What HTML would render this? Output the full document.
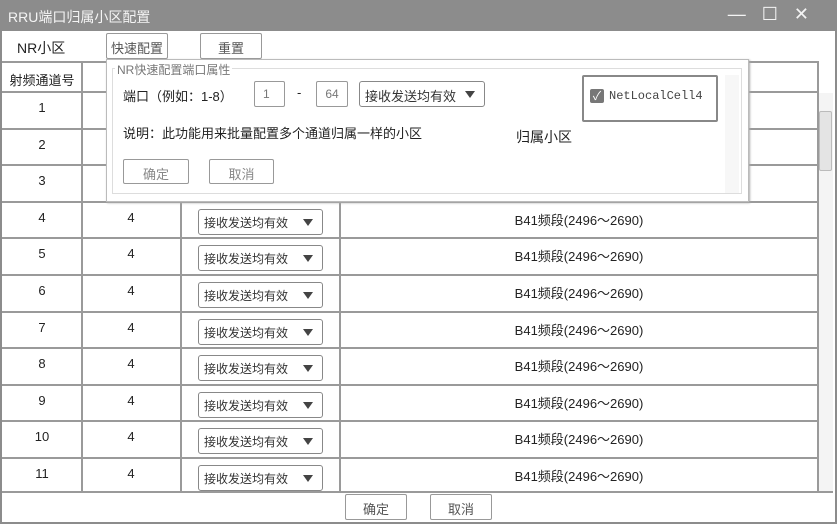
<!DOCTYPE html>
<html><head><meta charset="utf-8"><style>
*{box-sizing:border-box;margin:0;padding:0}
body{width:837px;height:524px;overflow:hidden;background:#fff;font-family:"Liberation Sans","Noto Sans CJK SC",sans-serif;font-size:13px;color:#222;position:relative}
.abs{position:absolute}
.title{left:0;top:0;width:837px;height:31px;background:#8c8c8c;color:#f4f4f4;font-size:14px;padding:7px 0 0 8px}
.frame{left:0;top:31px;width:837px;height:493px;border:2px solid #8c8c8c;border-top:none}
.btn{border:1px solid #999;border-radius:2px;background:#fff;color:#555;text-align:center;font-size:13px}
.hl{height:2px;background:#9a9a9a;left:2px;width:816px}
.vl{width:2px;background:#9a9a9a}
.cell{text-align:center;font-size:13px}
.sel{border:1px solid #888;border-radius:3px;background:#fff;font-size:12px;color:#333;padding:4px 0 0 5px}
.sel::after{content:"";position:absolute;right:9px;top:9px;border-left:5px solid transparent;border-right:5px solid transparent;border-top:7px solid #444}
</style></head><body>
<div class="abs title">RRU端口归属小区配置</div>
<div class="abs" style="right:12px;top:4px;color:#f4f4f4;font-size:18px;letter-spacing:16px">—☐✕</div>
<div class="abs frame"></div>
<div class="abs" style="left:17px;top:38px;font-size:14px">NR小区</div>
<div class="abs btn" style="left:106px;top:33px;width:62px;height:26px;padding-top:4px">快速配置</div>
<div class="abs btn" style="left:200px;top:33px;width:62px;height:26px;padding-top:4px">重置</div>
<div class="abs hl" style="top:61px"></div>
<div class="abs cell" style="left:2px;top:70px;width:80px">射频通道号</div>
<div class="abs vl" style="left:81px;top:61px;height:430px"></div>
<div class="abs vl" style="left:180px;top:201px;height:290px"></div>
<div class="abs vl" style="left:339px;top:201px;height:290px"></div>
<div class="abs vl" style="left:817px;top:61px;height:430px"></div>
<div class="abs" style="left:819px;top:93px;width:14px;height:398px;background:#f4f4f4"></div>
<div class="abs" style="left:819px;top:111px;width:13px;height:60px;background:#e4e4e4;border:1px solid #bbb;border-radius:2px"></div>
<div id="rows"></div>
<script>
var h='';for(var i=1;i<=11;i++){var t=Math.round(92+(i-1)*36.6);
h+='<div class="abs hl" style="top:'+(t-1)+'px"></div>';
h+='<div class="abs cell" style="left:2px;top:'+(t+8)+'px;width:80px">'+i+'</div>';
if(i>=4){h+='<div class="abs cell" style="left:82px;top:'+(t+8)+'px;width:98px">4</div>';
h+='<div class="abs sel" style="left:198px;top:'+(t+7)+'px;width:125px;height:26px">接收发送均有效</div>';
h+='<div class="abs cell" style="left:341px;top:'+(t+8)+'px;width:476px">B41频段(2496～2690)</div>';}}
document.getElementById('rows').innerHTML=h;
</script>
<div class="abs" style="left:2px;top:491px;width:831px;height:31px;background:#fff;border-top:2px solid #9a9a9a"></div>
<div class="abs btn" style="left:345px;top:494px;width:62px;height:26px;padding-top:4px">确定</div>
<div class="abs btn" style="left:430px;top:494px;width:62px;height:26px;padding-top:4px">取消</div>
<div class="abs" style="left:106px;top:59px;width:643px;height:143px;background:#fff;border:1px solid #bbb;box-shadow:1px 1px 2px #aaa"></div>
<div class="abs" style="left:112px;top:68px;width:630px;height:126px;border:1px solid #ddd"></div>
<div class="abs" style="left:115px;top:61px;background:#fff;color:#777;font-size:12px;padding:0 2px">NR快速配置端口属性</div>
<div class="abs" style="left:123px;top:86px;font-size:13px">端口（例如：1-8）</div>
<div class="abs btn" style="left:254px;top:81px;width:31px;height:26px;padding-top:5px;text-align:left;padding-left:8px;font-size:12px;color:#777">1</div>
<div class="abs" style="left:297px;top:85px">-</div>
<div class="abs btn" style="left:316px;top:81px;width:32px;height:26px;padding-top:5px;font-size:12px;color:#777">64</div>
<div class="abs sel" style="left:359px;top:81px;width:126px;height:26px;font-size:13px">接收发送均有效</div>
<div class="abs" style="left:123px;top:123px;font-size:13px">说明：此功能用来批量配置多个通道归属一样的小区</div>
<div class="abs" style="left:516px;top:127px;font-size:14px">归属小区</div>
<div class="abs btn" style="left:123px;top:159px;width:66px;height:25px;padding-top:4px;color:#888">确定</div>
<div class="abs btn" style="left:209px;top:159px;width:65px;height:25px;padding-top:4px;color:#888">取消</div>
<div class="abs" style="left:582px;top:75px;width:136px;height:47px;border:2px solid #888;border-radius:2px;background:#fff"></div>
<div class="abs" style="left:590px;top:89px;width:14px;height:14px;background:#777;border-radius:2px;color:#fff;font-size:12px;line-height:14px;text-align:center">✓</div>
<div class="abs" style="left:609px;top:89px;font-family:'Liberation Mono',monospace;font-size:12px;color:#444">NetLocalCell4</div>
<div class="abs" style="left:725px;top:75px;width:14px;height:118px;background:#f7f7f7"></div>
</body></html>
